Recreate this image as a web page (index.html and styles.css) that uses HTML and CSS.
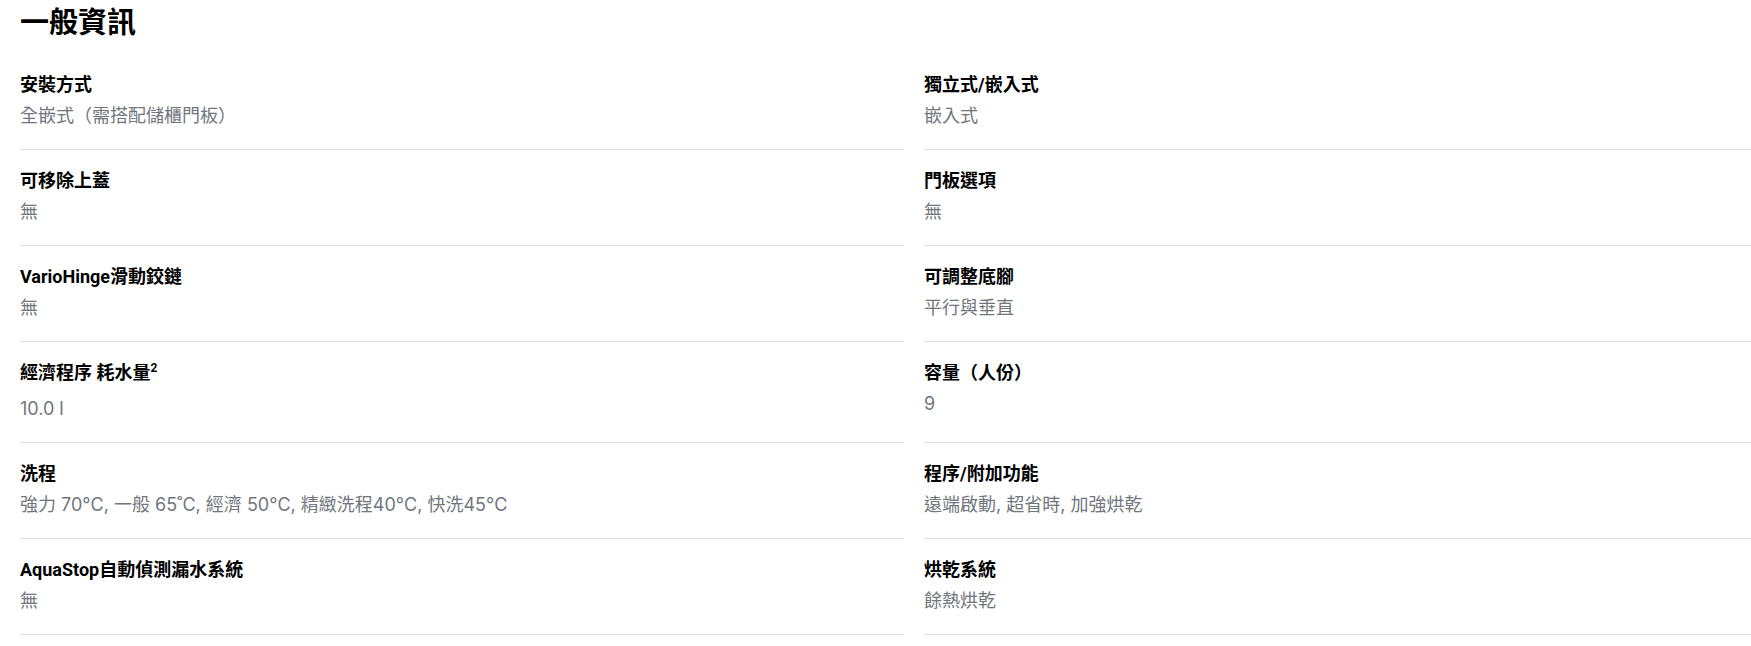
FILE: index.html
```html
<!DOCTYPE html>
<html lang="zh-Hant">
<head>
    <meta charset="UTF-8">
    <meta name="viewport" content="width=device-width, initial-scale=1.0">
    <title>一般資訊</title>
    <link rel="stylesheet" href="styles.css">
</head>
<body>
    <section class="specs">
        <h2 class="specs-title">一般資訊</h2>
        <dl class="specs-grid">
            <div class="spec">
                <dt>安裝方式</dt>
                <dd>全嵌式（需搭配儲櫃門板）</dd>
            </div>
            <div class="spec">
                <dt>獨立式/嵌入式</dt>
                <dd>嵌入式</dd>
            </div>
            <div class="spec">
                <dt>可移除上蓋</dt>
                <dd>無</dd>
            </div>
            <div class="spec">
                <dt>門板選項</dt>
                <dd>無</dd>
            </div>
            <div class="spec">
                <dt>VarioHinge滑動鉸鏈</dt>
                <dd>無</dd>
            </div>
            <div class="spec">
                <dt>可調整底腳</dt>
                <dd>平行與垂直</dd>
            </div>
            <div class="spec spec-note">
                <dt>經濟程序 耗水量<sup>2</sup></dt>
                <dd>10.0 l</dd>
            </div>
            <div class="spec">
                <dt>容量（人份）</dt>
                <dd>9</dd>
            </div>
            <div class="spec">
                <dt>洗程</dt>
                <dd>強力 70°C, 一般 65˚C, 經濟 50°C, 精緻洗程40°C, 快洗45°C</dd>
            </div>
            <div class="spec">
                <dt>程序/附加功能</dt>
                <dd>遠端啟動, 超省時, 加強烘乾</dd>
            </div>
            <div class="spec">
                <dt>AquaStop自動偵測漏水系統</dt>
                <dd>無</dd>
            </div>
            <div class="spec">
                <dt>烘乾系統</dt>
                <dd>餘熱烘乾</dd>
            </div>
        </dl>
    </section>
</body>
</html>
```

FILE: styles.css
```css
html, body {
    overflow: hidden;
}
body {
    margin: 0;
    padding: 0 0 0 20px;
    font-family: Roboto, "Noto Sans CJK TC", sans-serif;
    color: #000;
    background-color: #fff;
}
.specs-title {
    font-size: 29px;
    font-weight: 700;
    line-height: 40px;
    margin: 3px 0 0;
}
.specs-grid {
    display: grid;
    grid-template-columns: 884px 884px;
    column-gap: 20px;
    row-gap: 17px;
    margin: 28px 0 0;
}
.spec {
    padding: 0 0 20px;
    border-bottom: 1px solid #e0e2e5;
}
.spec dt {
    font-size: 18px;
    font-weight: 700;
    line-height: 28px;
}
.spec dt sup {
    font-size: 12px;
    line-height: 0;
}
.spec dd {
    margin: 3px 0 0;
    font-family: Inter, "Noto Sans CJK TC", sans-serif;
    font-size: 18px;
    line-height: 27px;
    color: #71767c;
}
.spec-note dd {
    margin-top: 8px;
}
```
